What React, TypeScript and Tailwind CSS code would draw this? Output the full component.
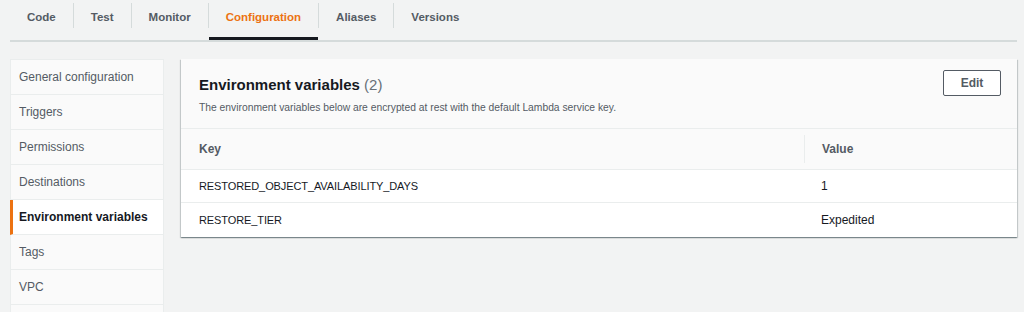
const tabs = ['Code', 'Test', 'Monitor', 'Configuration', 'Aliases', 'Versions'];
const sideItems = [
  'General configuration',
  'Triggers',
  'Permissions',
  'Destinations',
  'Environment variables',
  'Tags',
  'VPC',
  '',
];
const vars = [
  { key: 'RESTORED_OBJECT_AVAILABILITY_DAYS', value: '1', h: 'h-[33px]' },
  { key: 'RESTORE_TIER', value: 'Expedited', h: 'h-[34px]' },
];

export default function App() {
  return (
    <div className="min-h-screen bg-[#f2f3f3] pl-[10px] pr-[7px] font-['Liberation_Sans',Arial,sans-serif] text-[#16191f] overflow-hidden h-[312px]">
      {/* tabs */}
      <div className="flex h-[42px] border-b-2 border-[#d5dbdb]">
        {tabs.map((t, i) => (
          <div key={t} className="flex">
            {i > 0 && <span className="w-px h-[25px] mt-[3px] bg-[#d5dbdb]" />}
            <div
              className={
                'h-[40px] px-[17px] pt-[10px] text-[11.5px] leading-[14px] font-bold border-b-[3px] ' +
                (t === 'Configuration' ? 'text-[#ec7211] border-[#16191f]' : 'text-[#545b64] border-transparent')
              }
            >
              {t}
            </div>
          </div>
        ))}
      </div>

      <div className="flex gap-[17px] mt-[17px] items-start">
        {/* side nav */}
        <div className="w-[154px] shrink-0 border-x border-t border-[#eaeded] bg-[#fafafa]">
          {sideItems.map((s, i) => {
            const active = s === 'Environment variables';
            return (
              <div
                key={i}
                className={
                  'h-[35px] flex items-center border-b border-[#eaeded] text-[12px] whitespace-nowrap overflow-hidden ' +
                  (active
                    ? 'bg-white font-bold text-[#16191f] border-l-[3px] border-l-[#ec7211] -ml-px pl-[6px]'
                    : 'text-[#545b64] pl-[8px]')
                }
              >
                {s}
              </div>
            );
          })}
        </div>

        {/* panel */}
        <div className="flex-1 bg-white shadow-[0_1px_1px_0_rgba(0,28,36,0.3),1px_1px_1px_0_rgba(0,28,36,0.15),-1px_1px_1px_0_rgba(0,28,36,0.15)]">
          <div className="flex justify-between items-start bg-[#fafafa] border-b border-[#eaeded] h-[70px] pl-[18px] pr-[16px]">
            <div className="pt-[16px]">
              <h2 className="text-[15px] leading-[20px] font-bold">
                Environment variables <span className="font-normal text-[#687078]">(2)</span>
              </h2>
              <p className="mt-[6px] text-[10.3px] leading-[14px] text-[#545b64]">
                The environment variables below are encrypted at rest with the default Lambda service key.
              </p>
            </div>
            <button className="mt-[11px] w-[58px] h-[26px] border border-[#545b64] rounded-[2px] bg-white text-[12px] font-bold text-[#545b64]">
              Edit
            </button>
          </div>

          <div className="grid grid-cols-[623px_1fr] h-[41px] bg-[#fafafa] border-b border-[#eaeded] text-[12px] font-bold text-[#545b64]">
            <div className="flex items-center pl-[18px]">Key</div>
            <div className="flex items-center">
              <span className="w-px h-[28px] bg-[#eaeded]" />
              <span className="pl-[17px]">Value</span>
            </div>
          </div>

          {vars.map((v, i) => (
            <div
              key={v.key}
              className={
                'grid grid-cols-[623px_1fr] items-center text-[12px] ' +
                v.h +
                (i < vars.length - 1 ? ' border-b border-[#eaeded]' : '')
              }
            >
              <div className="pl-[18px] text-[11px] tracking-[-0.1px]">{v.key}</div>
              <div className="pl-[17px]">{v.value}</div>
            </div>
          ))}
        </div>
      </div>
    </div>
  );
}
